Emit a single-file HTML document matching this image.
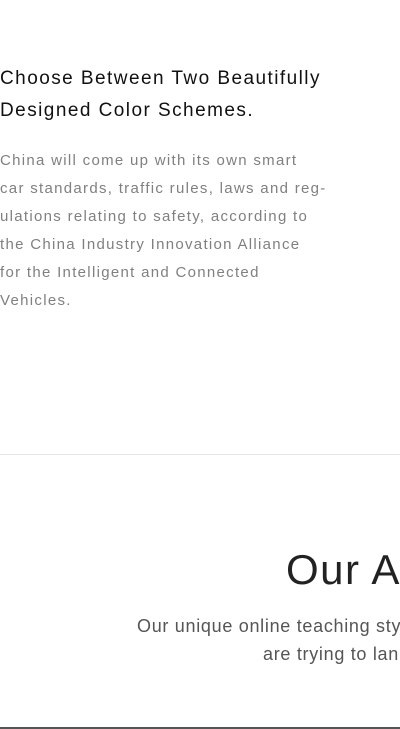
<!DOCTYPE html>
<html><head><style>
body{margin:0;width:400px;height:729px;overflow:hidden;background:#fff;font-family:"Liberation Sans",sans-serif;position:relative}
.a{position:absolute;white-space:nowrap}
h2{margin:0;position:absolute;left:0;top:63px;font-weight:normal;font-size:19px;line-height:32px;color:#111;letter-spacing:1.45px;white-space:nowrap}
.p{position:absolute;left:0;top:147px;font-size:15px;line-height:28px;color:#808080;letter-spacing:1.3px;white-space:nowrap}
</style></head><body>
<h2>Choose Between Two Beautifully<br>Designed Color Schemes.</h2>
<div class="p">China will come up with its own smart<br>car standards, traffic rules, laws and reg-<br>ulations relating to safety, according to<br>the China Industry Innovation Alliance<br>for the Intelligent and Connected<br>Vehicles.</div>
<div class="a" style="left:0;top:454px;width:400px;height:1px;background:#e6e6e6"></div>
<div class="a" style="left:286px;top:545px;font-size:42px;line-height:50px;color:#222;font-weight:300;letter-spacing:1.5px">Our A</div>
<div class="a" style="left:137px;top:612px;font-size:18px;line-height:28px;color:#555;letter-spacing:0.7px">Our unique online teaching sty</div>
<div class="a" style="left:263px;top:640px;font-size:18px;line-height:28px;color:#555;letter-spacing:0.7px">are trying to lan</div>
<div class="a" style="left:0;top:727px;width:400px;height:2px;background:#555"></div>
</body></html>
